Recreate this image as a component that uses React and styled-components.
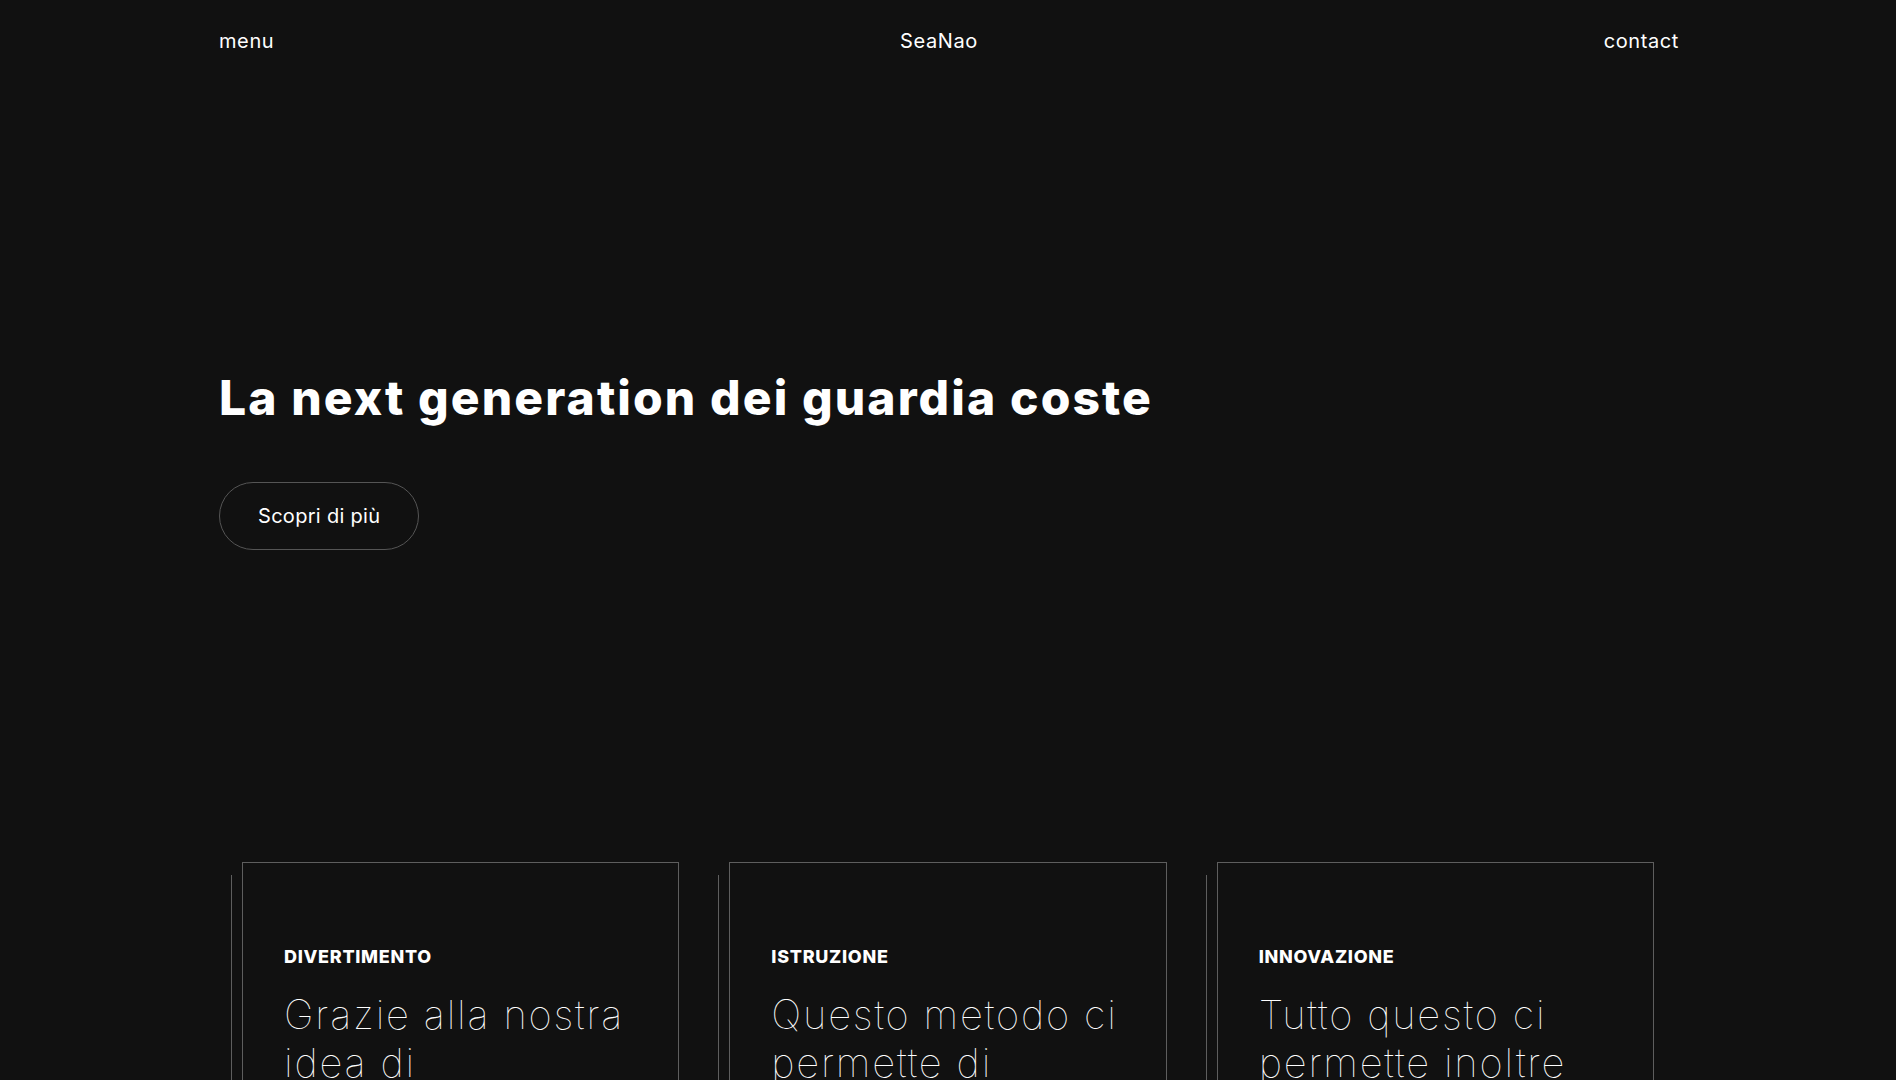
import React from "react";
import styled, { createGlobalStyle } from "styled-components";

const GlobalStyle = createGlobalStyle`
  html, body {
    margin: 0;
    padding: 0;
    background: #111111;
    color: #ffffff;
    font-family: "Inter", "Noto Sans", sans-serif;
  }
  * { box-sizing: border-box; }
`;

const Page = styled.div`
  width: 1462px;
  margin: 0 auto;
  height: 1080px;
  overflow: hidden;
`;

const Header = styled.header`
  display: flex;
  justify-content: space-between;
  align-items: center;
  padding: 27px 0 0 2px;
`;

const NavLink = styled.a`
  font-size: 20px;
  line-height: 28px;
  font-weight: 400;
  letter-spacing: 0.6px;
  color: #ffffff;
  text-decoration: none;
  cursor: pointer;
`;

const Hero = styled.section`
  padding: 314px 0 0 2px;
  display: flex;
  flex-direction: column;
  align-items: flex-start;
`;

const Title = styled.h1`
  margin: 0;
  font-size: 48px;
  line-height: 58px;
  font-weight: 800;
  letter-spacing: 2.1px;
  color: #ffffff;
`;

const CtaButton = styled.button`
  margin-top: 55px;
  padding: 19px 38px;
  border: 1px solid #555555;
  border-radius: 40px;
  background: transparent;
  color: #ffffff;
  font-family: inherit;
  font-size: 20px;
  line-height: 28px;
  font-weight: 400;
  letter-spacing: 0.3px;
  cursor: pointer;
`;

const Cards = styled.section`
  margin-top: 312px;
  display: grid;
  grid-template-columns: repeat(3, 1fr);
`;

const Column = styled.div`
  padding: 0 25px;
`;

const Card = styled.article`
  position: relative;
  border: 1px solid #5e5e5e;
  padding: 80px 41px 60px;
  min-height: 400px;

  &::before {
    content: "";
    position: absolute;
    left: -12px;
    top: 12px;
    bottom: -200px;
    width: 1px;
    background: #5e5e5e;
  }
`;

const Label = styled.h3`
  margin: 0;
  font-size: 18px;
  line-height: 27px;
  font-weight: 800;
  letter-spacing: 0.7px;
  text-transform: uppercase;
  color: #ffffff;
`;

const Body = styled.p`
  margin: 21px 0 0;
  font-size: 40px;
  line-height: 48px;
  font-weight: 100;
  letter-spacing: 1.8px;
  color: #ffffff;
`;

const cards = [
  {
    label: "Divertimento",
    text: "Grazie alla nostra idea di sorveglianza in mare possiamo unire gioco e sicurezza.",
  },
  {
    label: "Istruzione",
    text: "Questo metodo ci permette di formare nuove generazioni attente al mare.",
  },
  {
    label: "Innovazione",
    text: "Tutto questo ci permette inoltre numerosi vantaggi per l'ambiente.",
  },
];

export default function App() {
  return (
    <>
      <GlobalStyle />
      <Page>
        <Header>
          <NavLink>menu</NavLink>
          <NavLink>SeaNao</NavLink>
          <NavLink>contact</NavLink>
        </Header>
        <Hero>
          <Title>La next generation dei guardia coste</Title>
          <CtaButton>Scopri di più</CtaButton>
        </Hero>
        <Cards>
          {cards.map((c) => (
            <Column key={c.label}>
              <Card>
                <Label>{c.label}</Label>
                <Body>{c.text}</Body>
              </Card>
            </Column>
          ))}
        </Cards>
      </Page>
    </>
  );
}
